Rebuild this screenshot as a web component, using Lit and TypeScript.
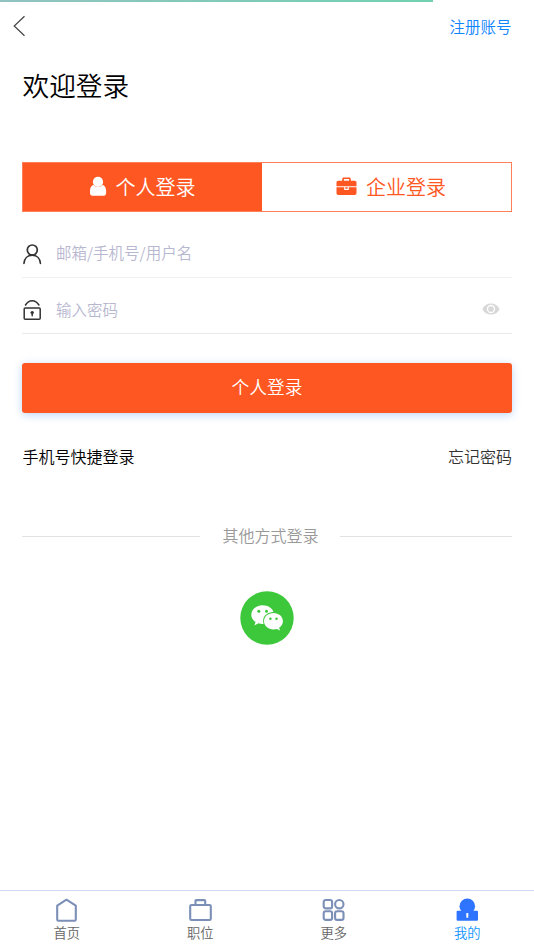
import { LitElement, html, css, svg } from "lit";
import { customElement } from "lit/decorators.js";
import { classMap } from "lit/directives/class-map.js";

const icons = {
  home: svg`<path d="M2.200 21.600V7.600L11.500 1.700l9.300 5.900v14a1.200 1.200 0 0 1-1.200 1.200H3.400a1.200 1.200 0 0 1-1.200-1.200z"/>`,
  jobs: svg`<rect x="1.200" y="7" width="20.600" height="15" rx="1.300"/><path d="M6.500 6.500V2.900a.8.8 0 0 1 .8-.8h8.100a.8.8 0 0 1 .8.8v3.600"/>`,
  more: svg`<rect x="1.700" y="2" width="8.400" height="8.400" rx="2"/><circle cx="17.300" cy="6.200" r="4.200"/><rect x="1.700" y="13.200" width="8.400" height="8.700" rx="2"/><rect x="13.100" y="13.200" width="8.400" height="8.700" rx="2"/>`,
  mine: svg`<g fill="#2e74ff" stroke="none"><circle cx="11.300" cy="8.200" r="7.800"/><rect x=".6" y="12.800" width="21.400" height="10" rx="1"/><rect x="10.300" y="15" width="2" height="4.800" rx=".6" fill="#fff"/></g>`,
};

const tabs = [
  { label: "首页", icon: icons.home, active: false },
  { label: "职位", icon: icons.jobs, active: false },
  { label: "更多", icon: icons.more, active: false },
  { label: "我的", icon: icons.mine, active: true },
];

@customElement("app-root")
export class AppRoot extends LitElement {
  static styles = css`
    :host {
      display: flex;
      flex-direction: column;
      box-sizing: border-box;
      height: 949px;
      background: #fff;
      color: #000;
      font-family: "Noto Sans CJK SC", sans-serif;
      font-size: 16px;
      font-weight: 350;
      line-height: 24px;
      overflow: hidden;
    }
    svg { display: block; flex: none; }
    .progress { height: 2px; width: 433px; background: linear-gradient(90deg, #91c2c0, #72d1b1); }
    .header { display: flex; justify-content: space-between; align-items: center; height: 48px; padding: 0 22.5px 0 12px; }
    .register { color: #0e84ff; font-size: 15.5px; }
    .title { margin: 15px 0 0 22.5px; font-size: 26.7px; line-height: 40px; font-weight: inherit; }
    .main { padding: 0 22px; }
    .switch { display: flex; height: 50px; margin-top: 57.4px; box-sizing: border-box; border: 1px solid #ff7f58; }
    .choice { display: flex; align-items: center; justify-content: center; flex: 1; box-sizing: border-box; padding-left: 9px; font-size: 20px; color: #ff5722; }
    .choice.on { flex: 0 0 239px; padding: 0; background: #ff5722; color: #fff; }
    .choice svg { margin: 0 9px 2px 0; }
    .field { display: flex; align-items: center; box-sizing: border-box; color: #b8b7d0; font-size: 15.5px; border-bottom: 1px solid #f0f0f0; }
    .field.name { height: 65.5px; padding-top: 17px; }
    .field.pass { height: 56.5px; padding-top: 9px; border-color: #e9e9e9; }
    .field span { padding-bottom: 3px; }
    .field .lead { margin-right: 14px; }
    .field.name .lead { margin-top: 1px; }
    .field .eye { margin: 0 12px 2.5px auto; }
    .submit { display: flex; justify-content: center; box-sizing: border-box; height: 50px; margin-top: 28.2px; padding-top: 11.9px; border-radius: 3px; background: #ff5722; color: #fff; font-size: 17.7px; box-shadow: 0 2px 8px rgba(50, 130, 230, .32); }
    .links { display: flex; justify-content: space-between; margin: 31.3px 0 0 .5px; }
    .forgot { color: #333; }
    .other { display: flex; align-items: center; margin-top: 55px; color: #999; }
    .other::before, .other::after { content: ""; height: 1px; margin-top: 3px; background: #e2e2e2; }
    .other::before { width: 178px; margin-right: 22.5px; }
    .other::after { flex: 1; margin-left: 21.5px; }
    .wechat { margin: 44px auto 0; }
    .nav { display: flex; height: 59px; box-sizing: border-box; margin-top: auto; border-top: 1px solid #d0d9f3; }
    .item { flex: 1; display: flex; flex-direction: column; align-items: center; padding-top: 7px; color: #666; font-size: 13.3px; line-height: 20px; }
    .item svg { fill: none; stroke: #7b8fb7; stroke-width: 2.1; stroke-linejoin: round; }
    .item span { margin-top: 1px; }
    .item.active { color: #1295ff; }
  `;

  render() {
    return html`
      <div class="progress"></div>
      <div class="header">
        <svg width="14" height="22" viewBox="0 0 14 22" fill="none" stroke="#444" stroke-width="1.2"><path d="M12.500 1.200 2.200 11l10.300 9.800"/></svg>
        <span class="register">注册账号</span>
      </div>
      <h1 class="title">欢迎登录</h1>
      <div class="main">
        <div class="switch">
          <div class="choice on">
            <svg width="17" height="20" viewBox="0 0 17 20" fill="currentColor"><circle cx="8" cy="5.900" r="5.100"/><path d="M3.500 9.100C1.100 9.600-.1 12.500-.1 16.200c0 2.700 1.200 3.600 3.200 3.600H13c2 0 3.200-.9 3.200-3.600 0-3.700-1.200-6.600-3.600-7.100-2.500 2.600-6.600 2.600-9.100 0z"/></svg>
            <span>个人登录</span>
          </div>
          <div class="choice">
            <svg width="21" height="19" viewBox="0 0 21 19"><path fill="currentColor" fill-rule="evenodd" d="M6.200 3.800V2.100C6.200 1 6.700.5 7.800.5h5.400c1.100 0 1.600.5 1.600 1.600v1.700h3.800c1.200 0 1.900.7 1.900 1.900V9.300H.5V5.700c0-1.200.7-1.900 1.900-1.900zM7.900 3.800h5.200V2.100H7.900zM.5 10.200h7.700v2.700h4.600v-2.700h7.700v5.900c0 1.200-.7 1.900-1.900 1.900H2.400C1.200 18 .5 17.300.5 16.100zM9.300 10.200h2.400v1.500H9.300z"/></svg>
            <span>企业登录</span>
          </div>
        </div>
        <div class="field name">
          <svg class="lead" width="20" height="22" viewBox="0 0 20 22" fill="none" stroke="#333" stroke-width="1.7" stroke-linecap="round"><circle cx="10.300" cy="7" r="5"/><path d="M2 20.300c.3-4.700 3.500-8.100 8.200-8.100s7.900 3.400 8.200 8.100"/></svg>
          <span>邮箱/手机号/用户名</span>
        </div>
        <div class="field pass">
          <svg class="lead" width="20" height="22" viewBox="0 0 20 22" fill="none" stroke="#333" stroke-width="1.5" stroke-linecap="round"><rect x="2.200" y="9.100" width="16" height="11.100" rx="1"/><path d="M3.500 6C5.200 3.100 7.400 1.700 10.200 1.700s5 1.400 6.700 4.300M10.200 14v2.800"/><circle cx="10.200" cy="13.600" r="1.700" fill="#333" stroke="none"/></svg>
          <span>输入密码</span>
          <svg class="eye" width="18" height="12" viewBox="0 0 18 12"><path fill="#d8d8d8" d="M.4 6C2 2.300 5.200.4 9 .4S16 2.300 17.600 6C16 9.700 12.800 11.600 9 11.600S2 9.700.4 6z"/><circle cx="9" cy="6" r="3.500" fill="#d8d8d8" stroke="#fff" stroke-width="1.300"/></svg>
        </div>
        <div class="submit">个人登录</div>
        <div class="links"><span>手机号快捷登录</span><span class="forgot">忘记密码</span></div>
        <div class="other">其他方式登录</div>
        <svg class="wechat" width="54" height="54" viewBox="0 0 54 54">
          <circle cx="27" cy="27" r="26.700" fill="#3dc83c"/>
          <path fill="#fff" d="M22.500 14.200c-6.300 0-11.200 4.200-11.200 9.500 0 3 1.500 5.500 4.200 7.300l-1.100 3.400 4-2.100c1.400.4 2.700.6 4.100.6h1.100c-2.200-7 3.500-12 9.800-11.900-1-4-5.400-6.800-10.900-6.800z"/>
          <path fill="#fff" d="M33.500 22.100c-5.300 0-9.500 3.600-9.500 8.100s4.200 8.200 9.500 8.200c1.200 0 2.300-.2 3.400-.5l3.100 1.700-.9-2.800c2.300-1.500 3.800-3.900 3.800-6.600 0-4.500-4.100-8.100-9.400-8.100z"/>
          <g fill="#3dc83c"><circle cx="18.800" cy="20.200" r="1.500"/><circle cx="26.500" cy="20.200" r="1.500"/><circle cx="30.400" cy="27.700" r="1.250"/><circle cx="36.500" cy="27.700" r="1.250"/></g>
        </svg>
      </div>
      <div class="nav">
        ${tabs.map(
          (t) => html`<div class=${classMap({ item: true, active: t.active })}>
            <svg width="23" height="24" viewBox="0 0 23 24">${t.icon}</svg>
            <span>${t.label}</span>
          </div>`
        )}
      </div>
    `;
  }
}
